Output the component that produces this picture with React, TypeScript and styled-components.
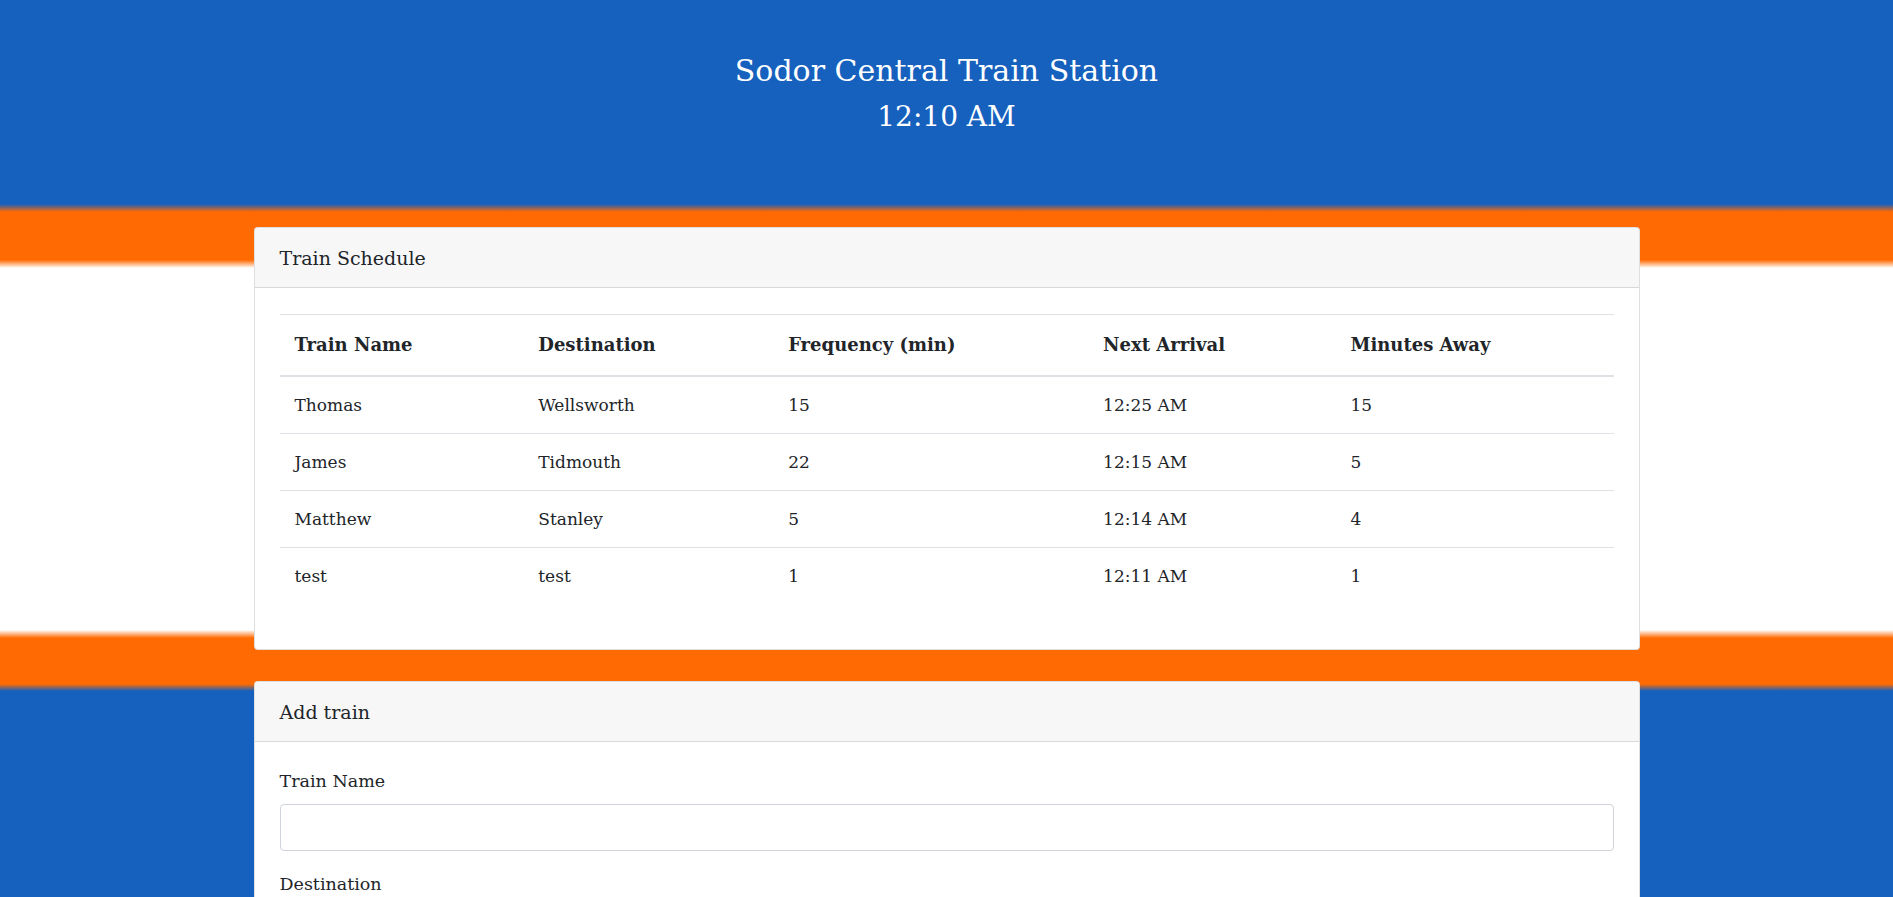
import React from 'react';
import styled, {createGlobalStyle} from 'styled-components';

const GlobalStyle = createGlobalStyle`
    html, body {
        margin: 0;
        padding: 0;
    }
    body {
        font-family: 'DejaVu Serif', 'Liberation Serif', serif;
        color: #212529;
        font-size: 18px;
    }
`;

const Page = styled.div`
    min-height: 100vh;
    padding-bottom: 60px;
    background: linear-gradient(
        to bottom,
        #1660be 0px,
        #1660be 204px,
        #ff6a03 212px,
        #ff6a03 260px,
        #ffffff 268px,
        #ffffff 630px,
        #ff6a03 638px,
        #ff6a03 684px,
        #1660be 691px,
        #1660be 100%
    );
`;

const Header = styled.header`
    padding-top: 48px;
    height: 227px;
    box-sizing: border-box;
    text-align: center;
    color: #fff;
`;

const Title = styled.h1<{size: number}>`
    margin: 0;
    font-weight: 400;
    font-size: ${p => p.size}px;
    line-height: 46px;
`;

const Container = styled.main`
    width: 1386px;
    margin: 0 auto;
    display: flex;
    flex-direction: column;
    gap: 31px;
`;

const Card = styled.section`
    background: #fff;
    border: 1px solid rgba(0, 0, 0, 0.125);
    border-radius: 4px;
    overflow: hidden;
`;

const CardHeader = styled.div`
    background: #f7f7f7;
    border-bottom: 1px solid rgba(0, 0, 0, 0.125);
    padding: 15px 25px 14px;
    font-size: 19px;
    line-height: 30px;
`;

const CardBody = styled.div`
    padding: 26px 25px 25px;
`;

const Table = styled.table`
    width: 100%;
    border-collapse: collapse;
    margin-bottom: 20px;
`;

const Th = styled.th<{w: number}>`
    width: ${p => p.w}px;
    text-align: left;
    font-weight: 700;
    font-size: 18px;
    line-height: 30px;
    padding: 15px;
    border-top: 1px solid #dee2e6;
    border-bottom: 2px solid #dee2e6;
`;

const Td = styled.td`
    font-size: 17px;
    line-height: 26px;
    padding: 15px;
    border-top: 1px solid #dee2e6;
`;

const Row = styled.tr`
    &:first-child td {
        border-top: none;
    }
`;

const FormGroup = styled.div`
    margin-bottom: 20px;
`;

const Label = styled.label`
    display: block;
    font-size: 17.5px;
    line-height: 27px;
    margin-bottom: 9px;
`;

const Input = styled.input`
    display: block;
    width: 100%;
    box-sizing: border-box;
    height: 47px;
    padding: 9px 15px;
    font-family: inherit;
    font-size: 17px;
    color: #495057;
    border: 1px solid #ced4da;
    border-radius: 4px;
    background: #fff;
`;

const SubmitButton = styled.button`
    font-family: inherit;
    font-size: 17px;
    padding: 9px 18px;
    color: #fff;
    background: #007bff;
    border: 1px solid #007bff;
    border-radius: 4px;
`;

const columns = [
    {label: 'Train Name', w: 242},
    {label: 'Destination', w: 241},
    {label: 'Frequency (min)', w: 322},
    {label: 'Next Arrival', w: 248},
    {label: 'Minutes Away', w: 282}
];

const trains = [
    ['Thomas', 'Wellsworth', '15', '12:25 AM', '15'],
    ['James', 'Tidmouth', '22', '12:15 AM', '5'],
    ['Matthew', 'Stanley', '5', '12:14 AM', '4'],
    ['test', 'test', '1', '12:11 AM', '1']
];

const fields = [
    {id: 'train-name', label: 'Train Name'},
    {id: 'destination', label: 'Destination'},
    {id: 'first-train', label: 'First Train Time (HH:mm - military time)'},
    {id: 'frequency', label: 'Frequency (min)'}
];

export default function App() {
    return (
        <Page>
            <GlobalStyle />
            <Header>
                <Title size={30}>Sodor Central Train Station</Title>
                <Title size={28}>12:10 AM</Title>
            </Header>
            <Container>
                <Card>
                    <CardHeader>Train Schedule</CardHeader>
                    <CardBody>
                        <Table>
                            <thead>
                                <tr>
                                    {columns.map(c => (
                                        <Th key={c.label} w={c.w}>
                                            {c.label}
                                        </Th>
                                    ))}
                                </tr>
                            </thead>
                            <tbody>
                                {trains.map((t, i) => (
                                    <Row key={i}>
                                        {t.map((cell, j) => (
                                            <Td key={j}>{cell}</Td>
                                        ))}
                                    </Row>
                                ))}
                            </tbody>
                        </Table>
                    </CardBody>
                </Card>
                <Card>
                    <CardHeader>Add train</CardHeader>
                    <CardBody>
                        {fields.map(f => (
                            <FormGroup key={f.id}>
                                <Label htmlFor={f.id}>{f.label}</Label>
                                <Input id={f.id} type="text" />
                            </FormGroup>
                        ))}
                        <SubmitButton type="button">Submit</SubmitButton>
                    </CardBody>
                </Card>
            </Container>
        </Page>
    );
}
